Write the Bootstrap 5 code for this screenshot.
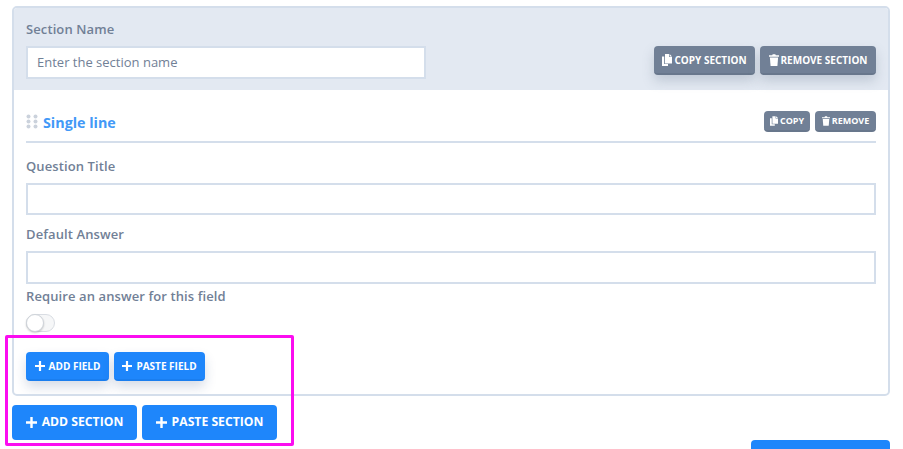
<!DOCTYPE html>
<html lang="en">
<head>
<meta charset="utf-8">
<title>Section editor</title>
<link href="https://cdn.jsdelivr.net/npm/bootstrap@5.3.0/dist/css/bootstrap.min.css" rel="stylesheet">
<style>
html,body{height:449px;overflow:hidden;background:#fff}
body{font-family:"Open Sans","Noto Sans",sans-serif;color:#718096;position:relative}
.page-wrap{padding:6px 13px 0 12px}
.sect-box{border:2px solid #d4deeb;border-radius:5px;background:#fff;height:390px;overflow:hidden}
.sect-head{background:#e3e9f2;height:82px;padding:12px 12px 0}
.fld-label{display:block;font-size:13px;font-weight:600;line-height:18px;color:#718096;margin:0;letter-spacing:.1px}
.sect-input.form-control{border:2px solid #d4deeb;border-radius:0;height:33px;font-size:13px;padding:0 9px;color:#718096;box-shadow:none;background:#fff}
.sect-input::placeholder{color:#718096;opacity:1}
.sect-input.head-input{width:400px;margin-top:8px;padding-bottom:2px}
.grey-btn.btn{background:#718096;border:0;border-bottom:2px solid #68778c;color:#fff;font-weight:700;border-radius:4px;text-transform:uppercase;display:inline-flex;align-items:center;justify-content:center;padding:0;line-height:1}
.btn-lg-grey.btn{height:29px;font-size:10px;box-shadow:0 6px 12px rgba(113,128,150,.3)}
.btn-sm-grey.btn{height:21px;font-size:9px}
.ico{fill:#fff;flex:none}
.ico-gap{margin-right:2px}
.lg-ico-gap{margin-right:5px}
.sect-actions{padding-top:26px;gap:5px}
.field-btns{gap:5px}
.sect-body{padding:0 12px}
.field-head{height:53px;border-bottom:2px solid #d4deeb;padding-top:21px}
.field-title{font-size:14.300px;font-weight:700;color:#4299f7;line-height:24px;margin-left:5px}
.dots{width:12px;height:15px;flex:none;fill:#cbd2dc;margin-top:-3px}
.sect-input.fld-block{height:33px;margin-top:8px}
.sect-input.fld-first{height:32px}
.q-label{margin-top:14px}
.a-label{margin-top:10px}
.r-label{margin-top:3px}
.sw-track{display:block;width:29px;height:18px;border:1px solid #d9dde3;border-radius:9px;background:#f6f7f8;position:relative;margin-top:9px}
.sw-knob{position:absolute;left:-1px;top:-1px;width:18px;height:18px;border-radius:50%;background:#fff;border:1px solid #cfd4da;box-shadow:0 1px 2px rgba(0,0,0,.2)}
.blue-btn.btn{background:#1e86fb;border:0;border-bottom:2px solid #1a7eef;color:#fff;font-weight:700;border-radius:4px;text-transform:uppercase;display:inline-flex;align-items:center;justify-content:center;padding:0;line-height:1}
.blue-sm.btn{height:29px;font-size:10px;box-shadow:0 6px 12px rgba(30,60,120,.18)}
.blue-lg.btn{height:35px;font-size:12.200px;border-bottom:0}
.add-row{margin-top:20px;gap:5px}
.sec-row{margin-top:9px;gap:5px}
.w-copysec{width:101px}.w-remsec{width:116px}.w-copy{width:46px}.w-rem{width:61px}
.w-addf{width:83px}.w-pastef{width:91px}.w-adds{width:125px}.w-pastes{width:135px}
.hl-box{position:absolute;left:5px;top:335px;width:289px;height:111px;border:3px solid #fb0df0;border-radius:2px;pointer-events:none}
.corner-btn{position:absolute;left:751px;top:440px;width:139px;height:9px;background:#1e86fb;border-radius:4px 4px 0 0}
</style>
</head>
<body>
<div class="page-wrap">
  <div class="sect-box">
    <div class="sect-head d-flex justify-content-between">
      <div>
        <label class="fld-label">Section Name</label>
        <input class="form-control sect-input head-input" type="text" placeholder="Enter the section name">
      </div>
      <div class="d-flex sect-actions">
        <button class="btn grey-btn btn-lg-grey w-copysec" type="button"><svg class="ico ico-gap" width="10" height="12" viewBox="0 0 10 12"><path d="M3 0h4v3h3v6.500H3z"/><path d="M7.600 0 10 2.400H7.600z"/><path d="M0 2.500h2.200V10H6v2H0z"/></svg>Copy Section</button>
        <button class="btn grey-btn btn-lg-grey w-remsec" type="button"><svg class="ico ico-gap" width="10" height="12" viewBox="0 0 10 12"><path d="M0 1.300h3.200L3.700.2h2.600l.5 1.100H10v1.400H0z"/><path d="M.9 3.400h8.200L8.400 12H1.600z"/></svg>Remove Section</button>
      </div>
    </div>
    <div class="sect-body">
      <div class="field-head d-flex justify-content-between align-items-start">
        <div class="d-flex align-items-center">
          <svg class="dots" viewBox="0 0 12 15"><circle cx="2.500" cy="2.500" r="2"/><circle cx="9.500" cy="2.500" r="2"/><circle cx="2.500" cy="7.500" r="2"/><circle cx="9.500" cy="7.500" r="2"/><circle cx="2.500" cy="12.500" r="2"/><circle cx="9.500" cy="12.500" r="2"/></svg>
          <span class="field-title">Single line</span>
        </div>
        <div class="d-flex field-btns">
          <button class="btn grey-btn btn-sm-grey w-copy" type="button"><svg class="ico ico-gap" width="8" height="10" viewBox="0 0 10 12"><path d="M3 0h4v3h3v6.500H3z"/><path d="M7.600 0 10 2.400H7.600z"/><path d="M0 2.500h2.200V10H6v2H0z"/></svg>Copy</button>
          <button class="btn grey-btn btn-sm-grey w-rem" type="button"><svg class="ico ico-gap" width="8" height="10" viewBox="0 0 10 12"><path d="M0 1.300h3.200L3.700.2h2.600l.5 1.100H10v1.400H0z"/><path d="M.9 3.400h8.200L8.400 12H1.600z"/></svg>Remove</button>
        </div>
      </div>
      <label class="fld-label q-label">Question Title</label>
      <input class="form-control sect-input fld-block fld-first" type="text">
      <label class="fld-label a-label">Default Answer</label>
      <input class="form-control sect-input fld-block" type="text">
      <label class="fld-label r-label">Require an answer for this field</label>
      <span class="sw-track"><span class="sw-knob"></span></span>
      <div class="d-flex add-row">
        <button class="btn blue-btn blue-sm w-addf" type="button"><svg class="ico me-1" width="10" height="10" viewBox="0 0 10 10"><path d="M3.900 0h2.200v3.900H10v2.200H6.100V10H3.900V6.100H0V3.900h3.900z"/></svg>Add Field</button>
        <button class="btn blue-btn blue-sm w-pastef" type="button"><svg class="ico me-1" width="10" height="10" viewBox="0 0 10 10"><path d="M3.900 0h2.200v3.900H10v2.200H6.100V10H3.900V6.100H0V3.900h3.900z"/></svg>Paste Field</button>
      </div>
    </div>
  </div>
  <div class="d-flex sec-row">
    <button class="btn blue-btn blue-lg w-adds" type="button"><svg class="ico lg-ico-gap" width="11" height="11" viewBox="0 0 10 10"><path d="M3.900 0h2.200v3.900H10v2.200H6.100V10H3.900V6.100H0V3.900h3.900z"/></svg>Add Section</button>
    <button class="btn blue-btn blue-lg w-pastes" type="button"><svg class="ico lg-ico-gap" width="11" height="11" viewBox="0 0 10 10"><path d="M3.900 0h2.200v3.900H10v2.200H6.100V10H3.900V6.100H0V3.900h3.900z"/></svg>Paste Section</button>
  </div>
</div>
<div class="corner-btn"></div>
<div class="hl-box"></div>
</body>
</html>
